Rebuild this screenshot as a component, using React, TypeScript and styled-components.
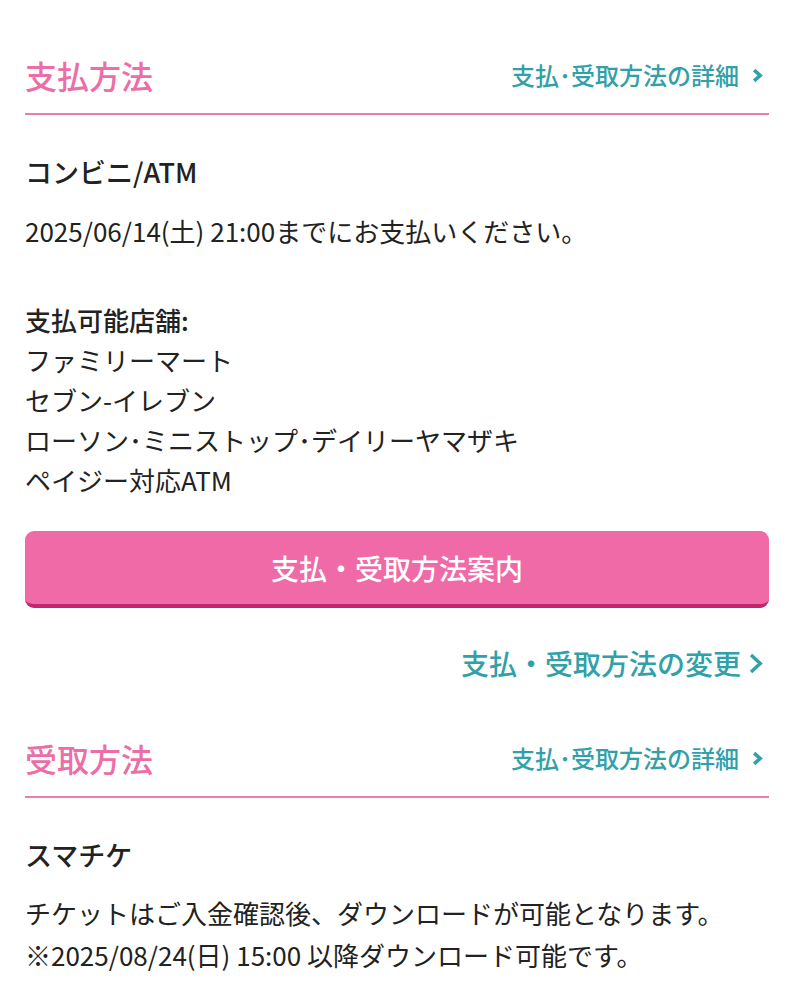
import styled, { createGlobalStyle } from 'styled-components'

const GlobalStyle = createGlobalStyle`
  html, body {
    margin: 0;
    padding: 0;
    background: #fff;
  }
  body {
    font-family: "Noto Sans CJK JP", "Noto Sans", sans-serif;
    color: #222;
  }
`

const Page = styled.div`
  width: 794px;
  padding: 0 25px 40px;
  box-sizing: border-box;
`

const SectionHeader = styled.div<{ $top: number }>`
  display: flex;
  align-items: center;
  justify-content: space-between;
  margin-top: ${p => p.$top}px;
  padding-bottom: 14px;
  border-bottom: 2px solid #e67fb0;
`

const SectionTitle = styled.h2`
  margin: 0;
  font-size: 32px;
  line-height: 48px;
  font-weight: 500;
  color: #ec6ea6;
`

const LinkText = styled.a<{ $size: number; $gap: number }>`
  display: flex;
  align-items: center;
  gap: ${p => p.$gap}px;
  font-size: ${p => p.$size}px;
  line-height: 40px;
  font-weight: 500;
  color: #30a0a9;
  text-decoration: none;
  cursor: pointer;
  margin-right: 6px;
  white-space: nowrap;
`

const ChevronSvg = styled.svg`
  flex-shrink: 0;
  display: block;
`

// bold right-pointing chevron, sized in px
const Chevron = ({ w, h, sw }: { w: number; h: number; sw: number }) => (
  <ChevronSvg width={w} height={h} viewBox={`0 0 ${w} ${h}`} fill="none">
    <polyline
      points={`${sw * 0.6},${sw * 0.6} ${w - sw * 0.8},${h / 2} ${sw * 0.6},${h - sw * 0.6}`}
      stroke="#30a0a9"
      strokeWidth={sw}
    />
  </ChevronSvg>
)

const MethodName = styled.div`
  margin-top: 37px;
  font-size: 27px;
  line-height: 40px;
  font-weight: 500;
`

const Paragraph = styled.p<{ $top: number; $lh?: number }>`
  margin: ${p => p.$top}px 0 0;
  font-size: 26px;
  line-height: ${p => p.$lh ?? 40}px;
`

const StoreList = styled.div`
  margin-top: 49px;
  font-size: 26px;
  line-height: 40px;
`

const StoreLabel = styled.div`
  font-weight: 500;
`

const GuideButton = styled.button`
  display: block;
  width: 100%;
  height: 77px;
  margin-top: 31px;
  border: none;
  border-bottom: 4px solid #c4256e;
  border-radius: 9px;
  background: #f06aa8;
  color: #fff;
  font-family: inherit;
  font-size: 28px;
  font-weight: 500;
  cursor: pointer;
`

const ChangeRow = styled.div`
  display: flex;
  justify-content: flex-end;
  margin-top: 35px;
`

export default function App() {
  return (
    <>
      <GlobalStyle />
      <Page>
        <SectionHeader $top={51}>
          <SectionTitle>支払方法</SectionTitle>
          <LinkText $size={24} $gap={13}>
            支払･受取方法の詳細
            <Chevron w={11} h={15} sw={3.6} />
          </LinkText>
        </SectionHeader>

        <MethodName>コンビニ/ATM</MethodName>
        <Paragraph $top={19}>2025/06/14(土) 21:00までにお支払いください。</Paragraph>

        <StoreList>
          <StoreLabel>支払可能店舗:</StoreLabel>
          <div>ファミリーマート</div>
          <div>セブン-イレブン</div>
          <div>ローソン･ミニストップ･デイリーヤマザキ</div>
          <div>ペイジー対応ATM</div>
        </StoreList>

        <GuideButton>支払・受取方法案内</GuideButton>

        <ChangeRow>
          <LinkText $size={28} $gap={8}>
            支払・受取方法の変更
            <Chevron w={14} h={21} sw={3.4} />
          </LinkText>
        </ChangeRow>

        <SectionHeader $top={51}>
          <SectionTitle>受取方法</SectionTitle>
          <LinkText $size={24} $gap={13}>
            支払･受取方法の詳細
            <Chevron w={11} h={15} sw={3.6} />
          </LinkText>
        </SectionHeader>

        <MethodName>スマチケ</MethodName>
        <Paragraph $top={17} $lh={42}>
          チケットはご入金確認後、ダウンロードが可能となります。
          <br />
          ※2025/08/24(日) 15:00 以降ダウンロード可能です。
        </Paragraph>
      </Page>
    </>
  )
}
